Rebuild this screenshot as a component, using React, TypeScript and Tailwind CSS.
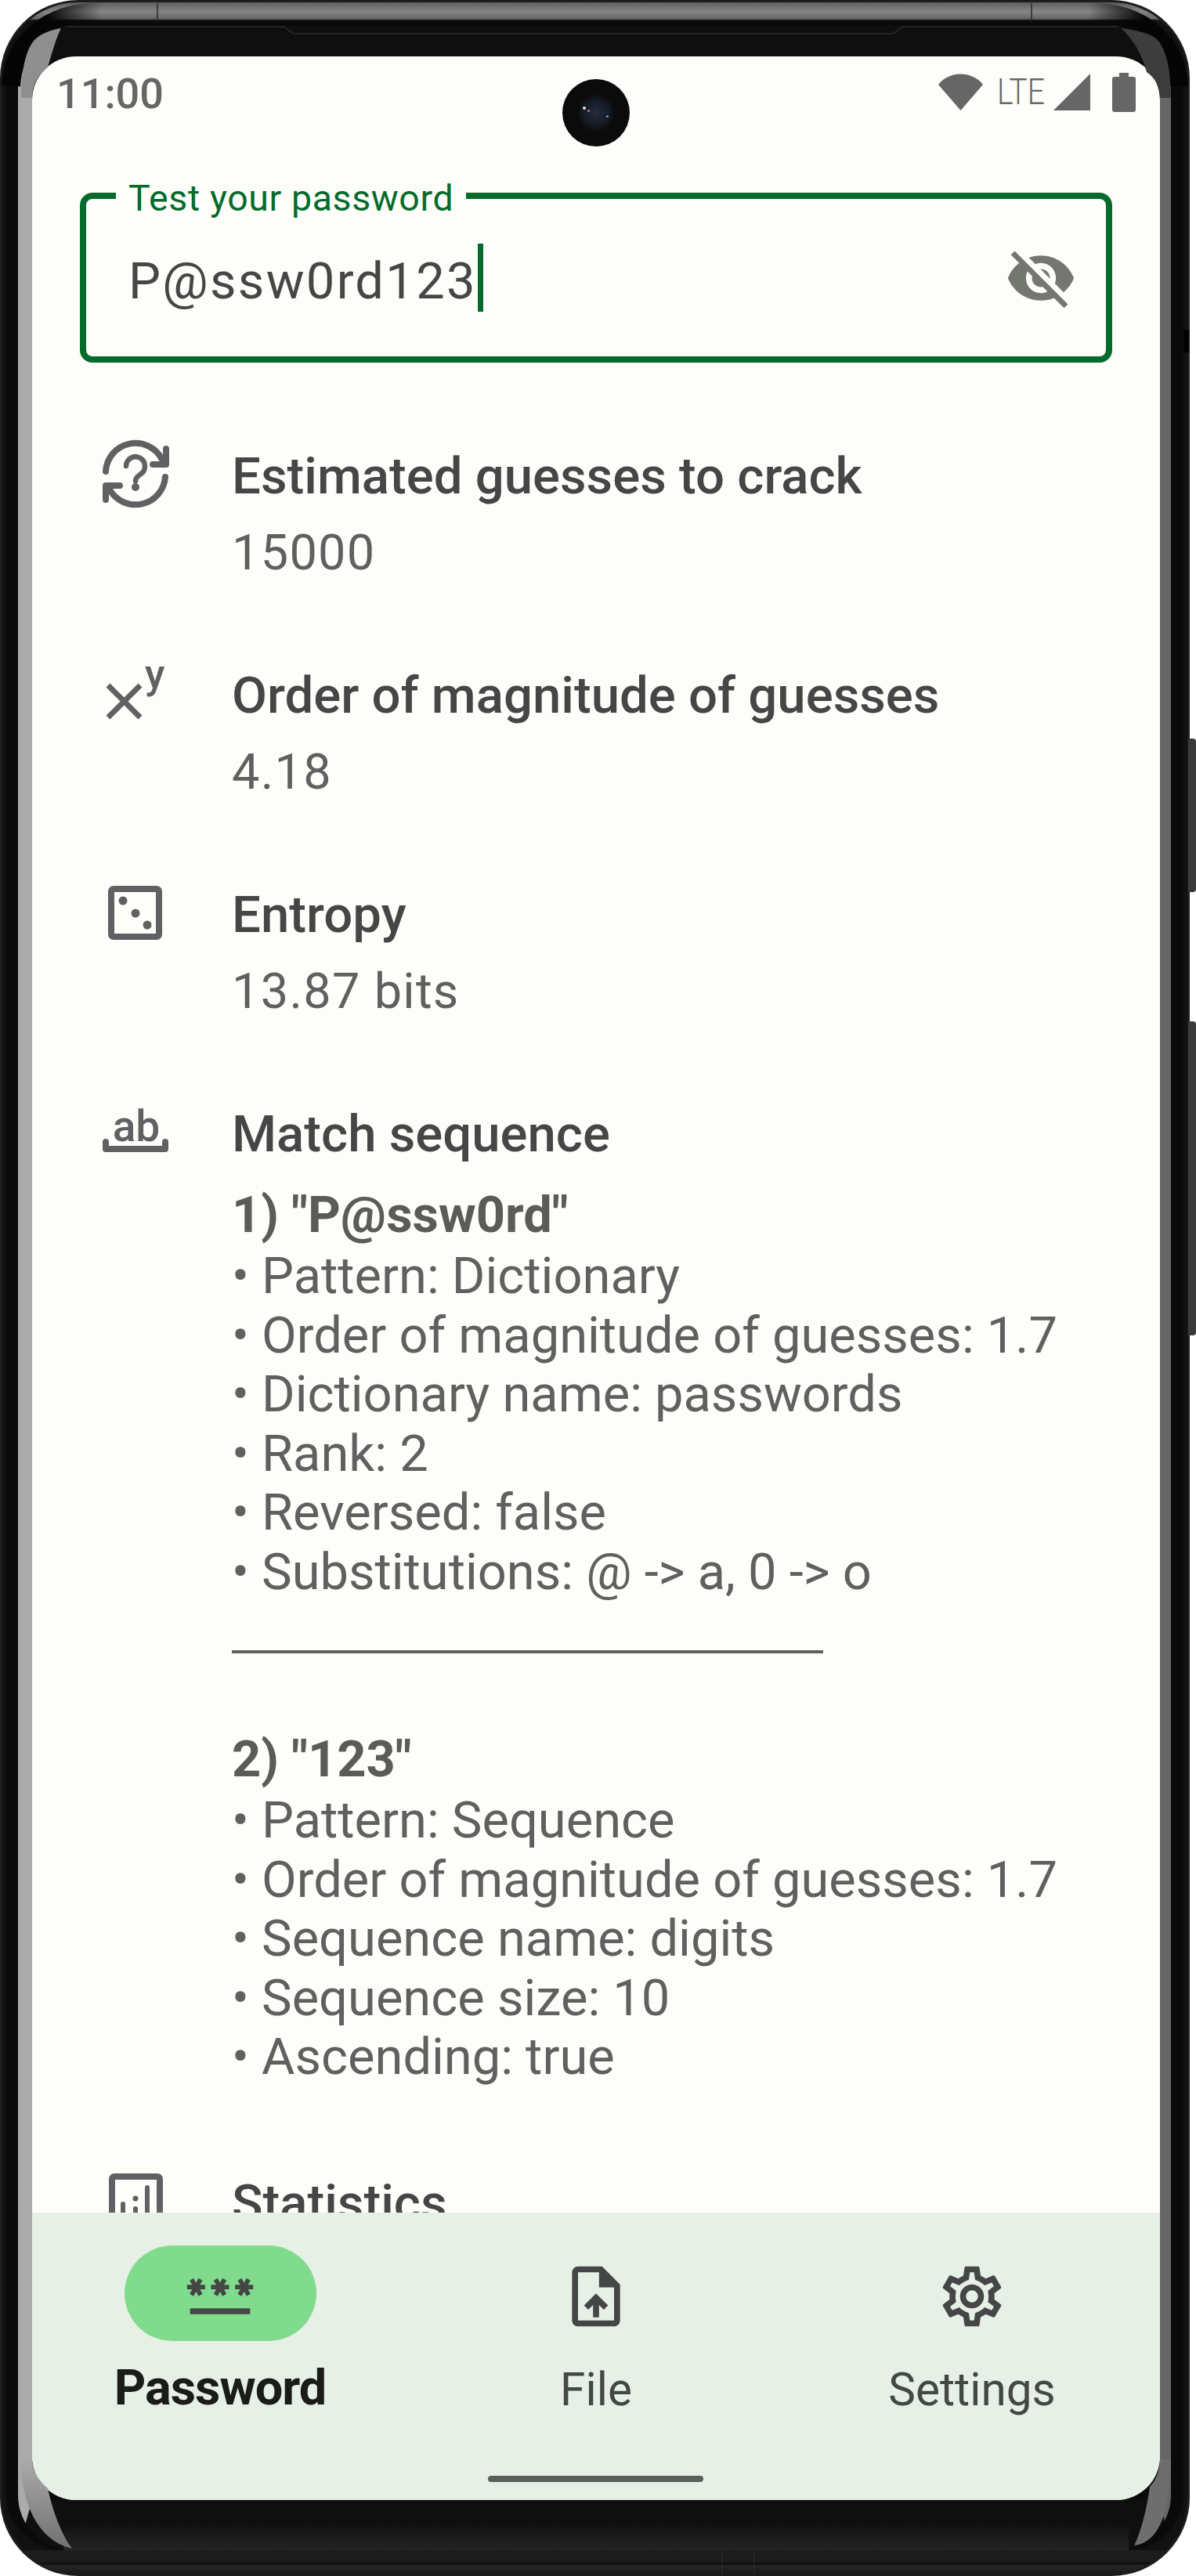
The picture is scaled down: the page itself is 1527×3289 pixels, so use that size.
import { MdVisibilityOff, MdPassword, MdOutlineUploadFile, MdOutlineSettings } from "react-icons/md";

function GuessIcon() {
  return (
    <svg viewBox="0 0 100 100" className="h-[100px] w-[100px]" fill="none" stroke="#5f6163" strokeWidth="8" strokeLinecap="round" strokeLinejoin="round">
      <path d="M12 47 A38 38 0 0 1 84 32" />
      <path d="M89 18 V38 H72" />
      <path d="M88 54 A38 38 0 0 1 17 70" />
      <path d="M12 83 V65 H30" />
      <path d="M38 40 A12 12 0 1 1 57 50 C53 53 50 55 50 59" strokeWidth="6.5" />
      <circle cx="50" cy="67" r="5" fill="#5f6163" stroke="none" />
    </svg>
  );
}

function PowerIcon() {
  return (
    <svg viewBox="0 0 100 100" className="h-[100px] w-[100px]" fill="none" stroke="#5f6163" strokeWidth="7">
      <path d="M15 40 L56 81 M56 40 L15 81" />
      <text x="62" y="43" fill="#5f6163" stroke="none" fontSize="52" fontWeight="500" fontFamily="Roboto, sans-serif">y</text>
    </svg>
  );
}

function DiceIcon() {
  return (
    <svg viewBox="0 0 100 100" className="h-[100px] w-[100px]" fill="none">
      <rect x="19" y="20" width="61" height="61" rx="3" stroke="#5f6163" strokeWidth="8" />
      <circle cx="34" cy="35" r="5.5" fill="#5f6163" />
      <circle cx="50" cy="51" r="5.5" fill="#5f6163" />
      <circle cx="65" cy="66" r="5.5" fill="#5f6163" />
    </svg>
  );
}

function MatchIcon() {
  return (
    <svg viewBox="0 0 100 100" className="h-[100px] w-[100px]" fill="none">
      <text x="51" y="62" textAnchor="middle" fill="#5f6163" fontSize="55" fontWeight="500" fontFamily="Roboto, sans-serif">ab</text>
      <path d="M12 63 V72 H88 V63" stroke="#5f6163" strokeWidth="8" strokeLinecap="round" strokeLinejoin="round" />
    </svg>
  );
}

function StatsIcon() {
  return (
    <svg viewBox="0 0 100 100" className="h-[100px] w-[100px]" fill="none">
      <rect x="20" y="19" width="61" height="72" rx="3" stroke="#5f6163" strokeWidth="8" />
      <path d="M34 54 V80 M50 60 V80 M65 33 V80" stroke="#5f6163" strokeWidth="6" strokeLinecap="round" />
      <circle cx="50" cy="47" r="3.5" fill="#5f6163" />
    </svg>
  );
}

function StatRow(props: { icon: React.ReactNode; title: string; value: string }) {
  return (
    <div className="flex items-start gap-[73px]">
      {props.icon}
      <div className="pt-[11px]">
        <div className="text-[65.3px] leading-[84px] font-medium text-[#444746]">{props.title}</div>
        <div className="mt-[14px] text-[63px] leading-[84px] tracking-[1.3px] text-[#5f6160]">{props.value}</div>
      </div>
    </div>
  );
}

function MatchBlock(props: { heading: string; lines: string[] }) {
  return (
    <div>
      <div className="text-[65px] leading-[82px] font-bold text-[#5a5c5a]">{props.heading}</div>
      {props.lines.map((line) => (
        <div key={line} className="text-[65px] leading-[75.5px] text-[#5f6160]">
          • {line}
        </div>
      ))}
    </div>
  );
}

function NavItem(props: { icon: React.ReactNode; label: string; active?: boolean }) {
  return (
    <div className="flex w-[480px] flex-col items-center">
      <div className={props.active ? "flex h-[122px] w-[245px] items-center justify-center rounded-[61px] bg-[#80db8d]" : "flex h-[122px] w-[245px] items-center justify-center pt-[8px]"}>
        {props.icon}
      </div>
      <div className={props.active ? "mt-[20px] text-[63px] leading-[80px] font-bold tracking-[-1px] text-[#191c19]" : "mt-[22px] text-[58.5px] leading-[80px] text-[#434843]"}>
        {props.label}
      </div>
    </div>
  );
}

export default function App() {
  return (
    <div className="relative h-[3289px] w-[1527px] overflow-hidden bg-white font-['Roboto',sans-serif]">
      {/* side buttons */}
      <div className="absolute top-[943px] right-0 h-[196px] w-[10px] rounded-r-[4px] bg-[#3a3a3a]" />
      <div className="absolute top-[1304px] right-0 h-[401px] w-[10px] rounded-r-[4px] bg-[#3a3a3a]" />

      <div className="h-full w-[1519px] rounded-[100px] bg-[#1c1c1c] p-[3px]">
        <div className="h-full rounded-[97px] bg-[linear-gradient(#5e5e5e_0px,#858585_12px,#666666_21px,#111_23px,#111_3253px,#1c1c1c_3253px,#1c1c1c_3268px,#0a0a0a_3270px,#262626_3273px,#1a1a1a_3283px)] px-[5px] pt-[23px] pb-[30px]">
          <div className="h-full rounded-t-[76px] rounded-b-[72px] bg-[#0a0a0a] pt-[7px] pr-[16px] pl-[15px]">
            <div className="relative h-full rounded-[70px] border-t-[39px] border-r-[14px] border-b-[64px] border-l-[18px] border-t-[#0f0f0f] border-r-[#666666] border-b-[#0f0f0f] border-l-[#ababab]">
              <div className="flex h-full flex-col overflow-hidden rounded-[56px] bg-[#fdfef9]">
                {/* status bar */}
                <div className="relative flex h-[102px] shrink-0 items-start justify-between pr-[31px] pl-[31px]">
                  <div className="pt-[17px] text-[54px] leading-[62px] font-medium text-[#666666]">11:00</div>
                  <div className="absolute top-[29px] left-[677px] h-[86px] w-[86px] rounded-full bg-[radial-gradient(circle_at_50%_50%,#252b3c_0px,#141a24_17px,#0b0b0b_24px)]">
                    <div className="absolute top-[35px] left-[26px] h-[4px] w-[4px] rounded-full bg-[#e8e8d8]" />
                    <div className="absolute top-[39px] left-[32px] h-[3px] w-[3px] rounded-full bg-[#b080a0]" />
                    <div className="absolute top-[46px] left-[56px] h-[3px] w-[3px] rounded-full bg-[#4aa8e0]" />
                  </div>
                  <div className="flex items-start pt-[22px]">
                    <svg viewBox="0 0 57 47" className="h-[47px] w-[57px]">
                      <path d="M0 14 C14 -4 43 -4 57 14 L28.5 47 Z" fill="#666666" />
                    </svg>
                    <div className="ml-[18px] w-[65px] origin-left scale-x-[0.85] text-[46px] leading-[46px] font-light text-[#666666]">LTE</div>
                    <svg viewBox="0 0 47 47" className="ml-[7px] h-[47px] w-[47px]">
                      <path d="M47 0 V47 H0 Z" fill="#666666" />
                    </svg>
                    <svg viewBox="0 0 30 50" className="ml-[28px] -mt-[1px] h-[50px] w-[30px]">
                      <path d="M9 0 H21 V5 H27 Q30 5 30 8 V47 Q30 50 27 50 H3 Q0 50 0 47 V8 Q0 5 3 5 H9 Z" fill="#666666" />
                    </svg>
                  </div>
                </div>

                {/* scrolling content */}
                <div className="min-h-0 flex-1 overflow-hidden px-[61px] pt-[72px]">
                  <div className="relative flex h-[217px] items-center justify-between rounded-[16px] border-[8px] border-[#046b2c] pr-[37px] pl-[54px]">
                    <div className="absolute -top-[27px] left-[38px] bg-[#fdfef9] px-[16px] text-[46.5px] leading-[52px] tracking-[0.6px] text-[#046b2c]">
                      Test your password
                    </div>
                    <div className="flex items-center">
                      <span className="mt-[10px] text-[65px] leading-[87px] tracking-[2.3px] text-[#444746]">P@ssw0rd123</span>
                      <span className="ml-[1px] h-[87px] w-[7px] bg-[#046b2c]" />
                    </div>
                    <MdVisibilityOff className="h-[92px] w-[92px] text-[#74776f]" />
                  </div>

                  <div className="mt-[92px] flex flex-col gap-[87px] pl-[21px]">
                    <StatRow icon={<GuessIcon />} title="Estimated guesses to crack" value="15000" />
                    <StatRow icon={<PowerIcon />} title="Order of magnitude of guesses" value="4.18" />
                    <StatRow icon={<DiceIcon />} title="Entropy" value="13.87 bits" />

                    <div className="flex items-start gap-[73px]">
                      <MatchIcon />
                      <div className="pt-[11px]">
                        <div className="text-[65.3px] leading-[84px] font-medium text-[#444746]">Match sequence</div>
                        <div className="mt-[20px]">
                          <MatchBlock
                            heading={'1) "P@ssw0rd"'}
                            lines={[
                              "Pattern: Dictionary",
                              "Order of magnitude of guesses: 1.7",
                              "Dictionary name: passwords",
                              "Rank: 2",
                              "Reversed: false",
                              "Substitutions: @ -> a, 0 -> o",
                            ]}
                          />
                        </div>
                        <div className="mt-[62px] mb-[94px] h-[4px] w-[755px] bg-[#5f6160]" />
                        <MatchBlock
                          heading={'2) "123"'}
                          lines={[
                            "Pattern: Sequence",
                            "Order of magnitude of guesses: 1.7",
                            "Sequence name: digits",
                            "Sequence size: 10",
                            "Ascending: true",
                          ]}
                        />
                      </div>
                    </div>

                    <div className="mt-[8px]">
                      <StatRow icon={<StatsIcon />} title="Statistics" value="" />
                    </div>
                  </div>
                </div>

                {/* bottom navigation */}
                <div className="relative h-[367px] shrink-0 bg-[#e7f0e6]">
                  <div className="flex pt-[42px]">
                    <NavItem active label="Password" icon={<MdPassword className="h-[92px] w-[92px] text-[#444746]" />} />
                    <NavItem label="File" icon={<MdOutlineUploadFile className="h-[92px] w-[92px] text-[#444746]" />} />
                    <NavItem label="Settings" icon={<MdOutlineSettings className="h-[92px] w-[92px] text-[#444746]" />} />
                  </div>
                  <div className="absolute top-[336px] left-[582px] h-[8px] w-[275px] rounded-full bg-[#5a5f5a]" />
                </div>
              </div>
              {/* chin sheen */}
              <div className="absolute top-full right-[40px] left-[40px] h-[64px] bg-[linear-gradient(#0f0f0f_45%,#242424)]" />
            </div>
          </div>
        </div>
      </div>

      {/* reflections and hairlines on the phone body */}
      <svg viewBox="0 0 1527 3289" className="pointer-events-none absolute top-0 left-0 h-[3289px] w-[1527px]" fill="none">
        <defs>
          <linearGradient id="bandLeft" x1="20" y1="0" x2="130" y2="0" gradientUnits="userSpaceOnUse">
            <stop offset="0.35" stopColor="#050505" />
            <stop offset="1" stopColor="#050505" stopOpacity="0" />
          </linearGradient>
          <linearGradient id="bandRight" x1="1500" y1="0" x2="1390" y2="0" gradientUnits="userSpaceOnUse">
            <stop offset="0.35" stopColor="#050505" />
            <stop offset="1" stopColor="#050505" stopOpacity="0" />
          </linearGradient>
          <linearGradient id="chinLeft" x1="0" y1="3140" x2="0" y2="3254" gradientUnits="userSpaceOnUse">
            <stop offset="0" stopColor="#ababab" />
            <stop offset="1" stopColor="#707070" />
          </linearGradient>
        </defs>
        <path d="M80 34 H362 L375 43 H1140 L1153 34 H1428" stroke="#2c2c2c" strokeWidth="1.5" />
        <path d="M201 4 V27 M1317 4 V27 M922 3256 V3289 M963 3256 V3289" stroke="#2a2a2a" strokeWidth="1.5" />
        <path d="M1515 421 V450" stroke="#000" strokeWidth="7" />
        <path d="M14 110 C16 60 55 15 130 15" stroke="url(#bandLeft)" strokeWidth="24" />
        <path d="M1505 110 C1503 60 1464 15 1389 15" stroke="url(#bandRight)" strokeWidth="24" />
        <path d="M27 125 C27 90 33 62 45 50 C55 41 67 38 78 36 C72 48 66 68 61 86 C50 94 41 108 41 125 Z" fill="#8f8f8f" />
        <path d="M1495 125 C1495 90 1489 62 1477 50 C1467 41 1445 38 1431 36 C1445 48 1458 68 1464 92 C1475 100 1481 110 1481 125 Z" fill="#3d3d3d" />
        <path d="M26 3140 C27 3195 48 3244 92 3254 C78 3235 67 3205 61 3177 C50 3168 41 3155 41 3140 Z" fill="url(#chinLeft)" />
        <path d="M1495 3140 C1495 3190 1486 3246 1448 3250 C1456 3235 1464 3205 1468 3175 C1475 3168 1481 3155 1481 3140 Z" fill="#6e6e6e" />
      </svg>
    </div>
  );
}
